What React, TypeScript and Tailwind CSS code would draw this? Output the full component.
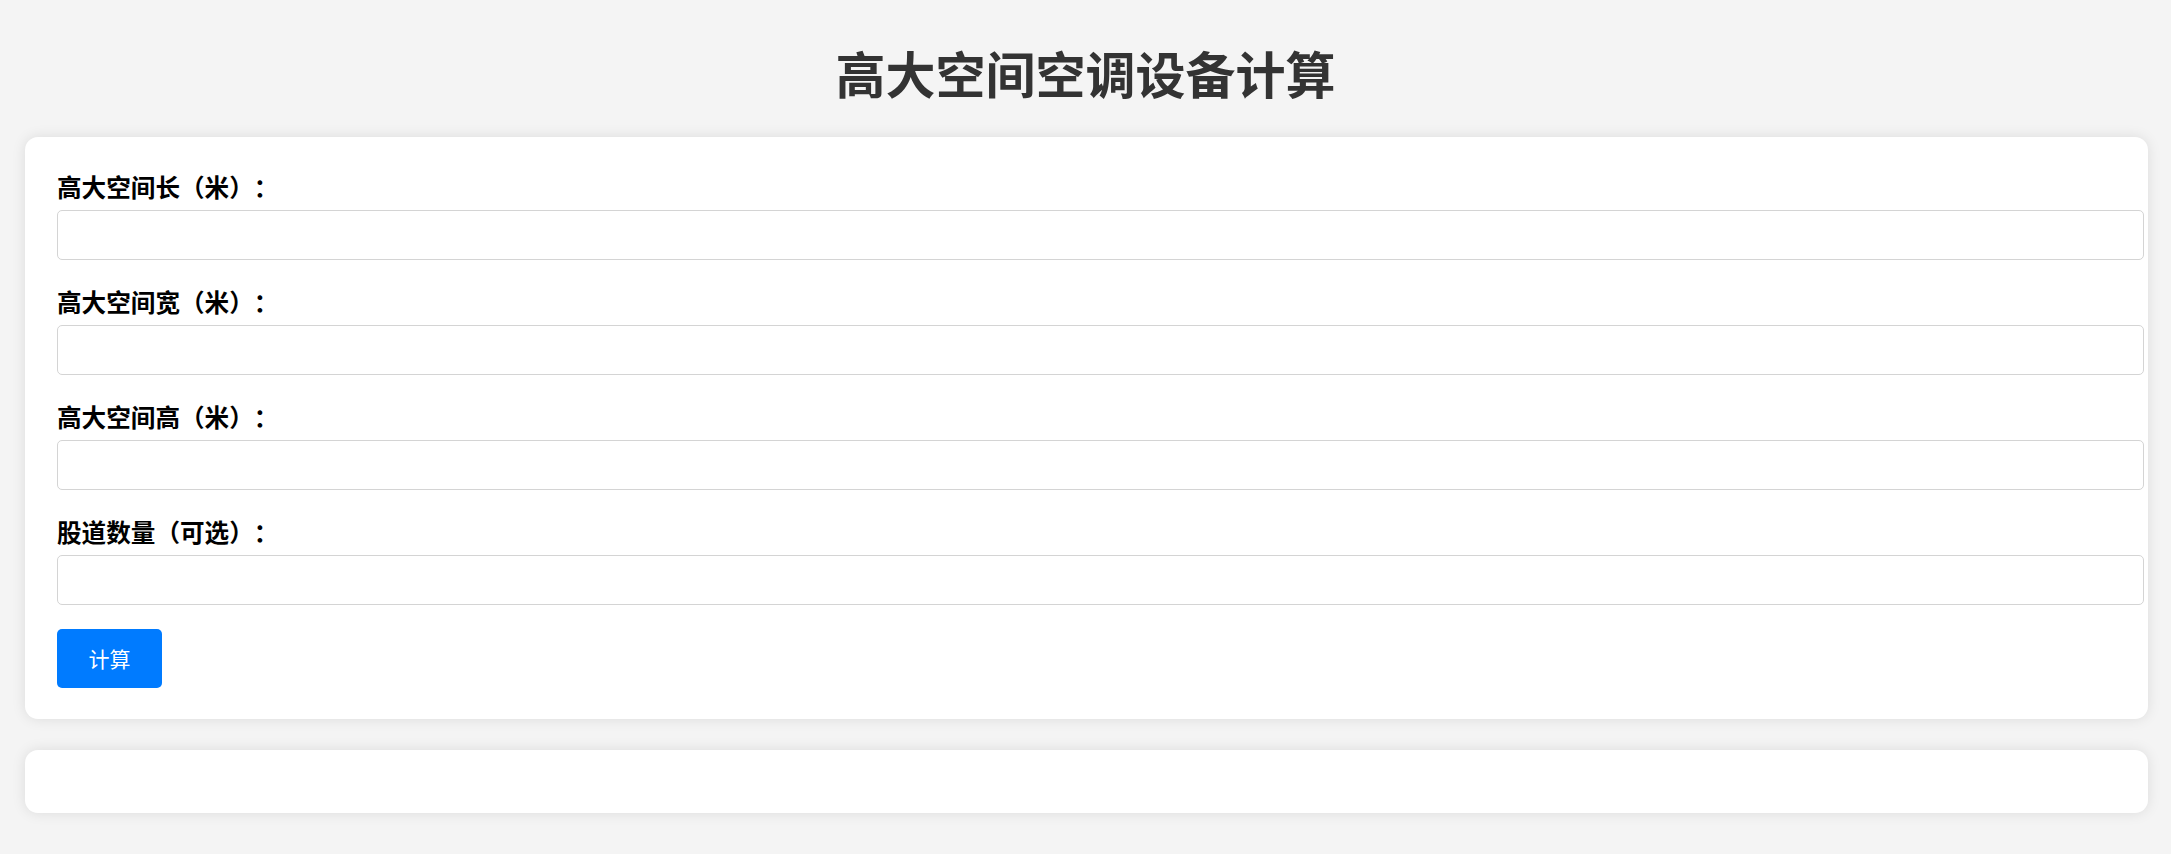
import React, { useState } from 'react';

const fields = [
    { key: 'length', label: '高大空间长（米）：' },
    { key: 'width', label: '高大空间宽（米）：' },
    { key: 'height', label: '高大空间高（米）：' },
    { key: 'tracks', label: '股道数量（可选）：' },
];

const App: React.FC = () => {
    const [values, setValues] = useState<Record<string, string>>({});
    const [result, setResult] = useState('');

    const handleCalc = () => {
        const l = parseFloat(values.length || '');
        const w = parseFloat(values.width || '');
        const h = parseFloat(values.height || '');
        if (isNaN(l) || isNaN(w) || isNaN(h)) {
            setResult('');
            return;
        }
        setResult(`空间体积：${(l * w * h).toFixed(2)} 立方米`);
    };

    return (
        <div
            className="min-h-[854px] bg-[#f4f4f4] pt-[47px] pb-[41px] [text-spacing-trim:space-all]"
            style={{ fontFamily: '"Noto Sans CJK SC", "Noto Sans", sans-serif' }}
        >
            <h1 className="text-center text-[50px] leading-[50px] font-bold text-[#333]">高大空间空调设备计算</h1>

            {/* form card */}
            <div className="ml-[25px] mr-[23px] mt-[40px] bg-white rounded-[13px] shadow-[0_0_14px_rgba(0,0,0,0.1)] pt-[33px] pb-[31px] px-[32px]">
                {fields.map((f, i) => (
                    <div key={f.key} className={i > 0 ? 'mt-[25px]' : ''}>
                        <label className="block text-[24.6px] leading-[32px] font-bold text-black">{f.label}</label>
                        <input
                            type="text"
                            value={values[f.key] || ''}
                            onChange={e => setValues({ ...values, [f.key]: e.target.value })}
                            className="mt-[8px] block w-[calc(100%+28px)] h-[50px] px-[13px] text-[21px] border border-[#d4d4d4] rounded-[5px] bg-white outline-none"
                        />
                    </div>
                ))}
                <button
                    onClick={handleCalc}
                    className="mt-[24px] w-[105px] h-[59px] bg-[#007bff] text-white text-[21px] leading-none rounded-[5px] flex items-center justify-center"
                >
                    计算
                </button>
            </div>

            {/* result card */}
            <div className="ml-[25px] mr-[23px] mt-[31px] h-[63px] bg-white rounded-[13px] shadow-[0_0_14px_rgba(0,0,0,0.1)] px-[32px] flex items-center text-[21px] text-[#333]">
                {result}
            </div>
        </div>
    );
};

export default App;
